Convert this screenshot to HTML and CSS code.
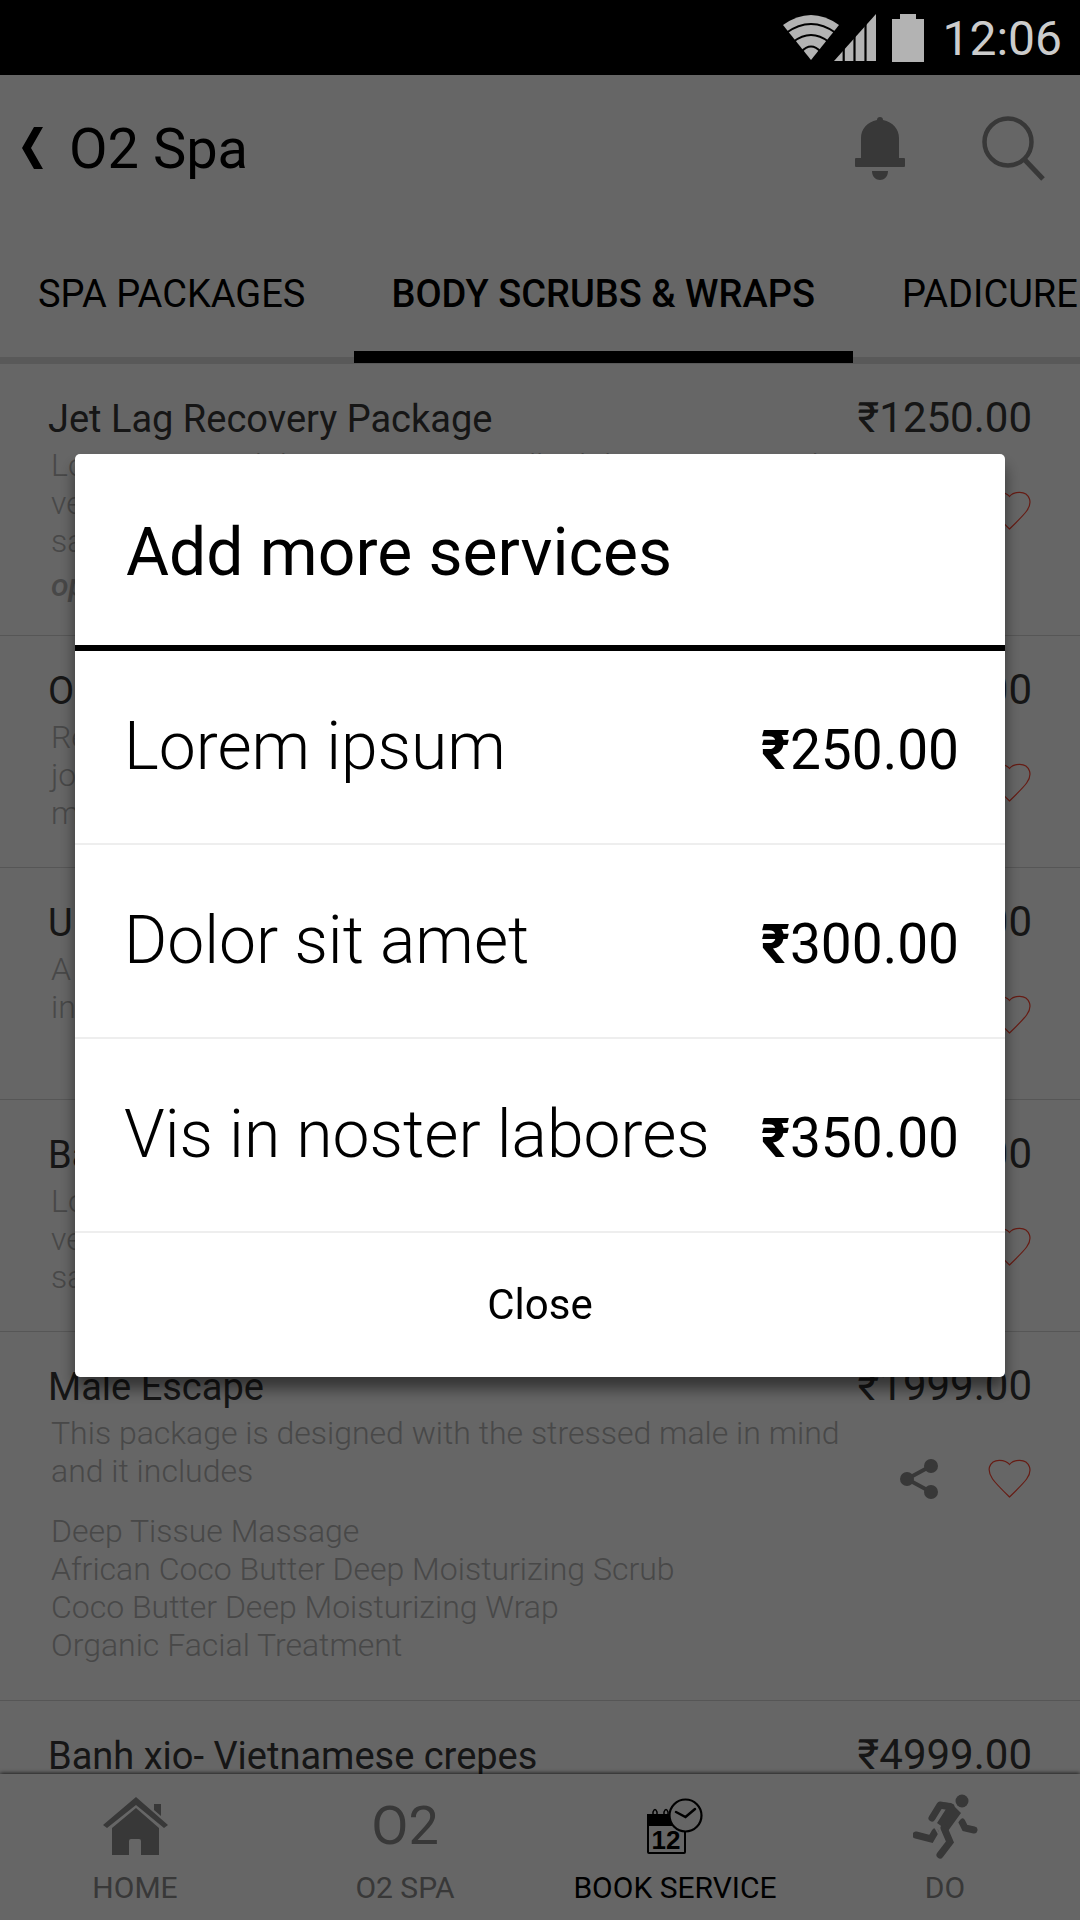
FILE: index.html
```html
<!DOCTYPE html>
<html lang="en">
<head>
<meta charset="utf-8">
<meta name="viewport" content="width=device-width, initial-scale=1">
<title>O2 Spa</title>
<link rel="stylesheet" href="styles.css">
</head>
<body>
<svg class="sprite" aria-hidden="true">
  <symbol id="heart" viewBox="0 0 43 39"><path d="M21.500 5.500C18 1 5 -2 1.500 8C-.5 16 5 22 21.500 38C38 22 44 16 41.500 8C38 -2 25 1 21.500 5.500Z" fill="none" stroke="#ff4632" stroke-width="1.200"/></symbol>
  <symbol id="share" viewBox="0 0 38 40"><path d="M31 7L7 20L31 33" fill="none" stroke="#8c8c8c" stroke-width="4"/><circle cx="7" cy="20" r="7" fill="#8c8c8c"/><circle cx="31" cy="7" r="7" fill="#8c8c8c"/><circle cx="31" cy="33" r="7" fill="#8c8c8c"/></symbol>
</svg>
<div class="app">
  <div class="status">
    <svg class="wifi" viewBox="0 0 56 45"><path d="M0 10Q28-10 56 10L28 45Z" fill="#b3b3b3"/><path d="M3 18Q28 0 53 18M10 27Q28 13 46 27M18 37Q28 26 38 37" fill="none" stroke="#000" stroke-width="2"/></svg>
    <svg class="signal" viewBox="0 0 42 47"><path d="M0 47L42 0V47Z" fill="#b3b3b3"/><path d="M9.700 0V47M20.500 0V47M31.500 0V47" stroke="#000" stroke-width="2.200"/></svg>
    <svg class="battery" viewBox="0 0 32 48"><path d="M8 0H24V5H32V48H0V5H8Z" fill="#b3b3b3"/></svg>
    <time class="clock">12:06</time>
  </div>

  <header class="appbar">
    <button class="icon-button" aria-label="Back"><svg class="back" viewBox="0 0 21 42"><path d="M12 0H21L9 21L21 42H12L0 21Z"/></svg></button>
    <h1 class="title">O2 Spa</h1>
    <button class="icon-button" aria-label="Notifications"><svg class="bell" viewBox="0 0 50 64"><path d="M22 4A3 3 0 0 1 28 4C38 6 44 13 44 22V42H49Q50 42 50 43V50Q50 51 49 51H1Q0 51 0 50V43Q0 42 1 42H6V22C6 13 12 6 22 4ZM17 55H33C33 67 17 67 17 55Z" fill="#8c8c8c"/></svg></button>
    <button class="icon-button" aria-label="Search"><svg class="search" viewBox="0 0 64 65"><circle cx="26" cy="26" r="23.500" fill="none" stroke="#8c8c8c" stroke-width="4.500"/><path d="M42 43L61 63" stroke="#8c8c8c" stroke-width="5"/></svg></button>
  </header>

  <nav class="tabs">
    <a class="tab" href="#packages">SPA PACKAGES</a>
    <a class="tab active" href="#scrubs">BODY SCRUBS &amp; WRAPS</a>
    <a class="tab" href="#padicure">PADICURE</a>
  </nav>

  <main class="list">
    <article class="item first">
      <div class="item-head"><h2>Jet Lag Recovery Package</h2><span class="price">₹1250.00</span></div>
      <div class="item-body">
        <div class="text"><p>Lorem ipsum dolor sit amet, an nulla dolor mea meis id<br>vel minim<br>sale omnes</p><p class="option">optional</p></div>
        <div class="actions"><svg class="share"><use href="#share"/></svg><svg class="heart"><use href="#heart"/></svg></div>
      </div>
    </article>
    <article class="item">
      <div class="item-head"><h2>O2 Ritual</h2><span class="price">₹1500.00</span></div>
      <div class="item-body">
        <div class="text"><p>Relaxing<br>journey<br>massage</p></div>
        <div class="actions"><svg class="share"><use href="#share"/></svg><svg class="heart"><use href="#heart"/></svg></div>
      </div>
    </article>
    <article class="item">
      <div class="item-head"><h2>Ultimate</h2><span class="price">₹1800.00</span></div>
      <div class="item-body">
        <div class="text"><p>A scrub<br>in oils</p></div>
        <div class="actions"><svg class="share"><use href="#share"/></svg><svg class="heart"><use href="#heart"/></svg></div>
      </div>
    </article>
    <article class="item">
      <div class="item-head"><h2>Balance</h2><span class="price">₹1600.00</span></div>
      <div class="item-body">
        <div class="text"><p>Lorem<br>vel minim<br>sale omnes</p></div>
        <div class="actions"><svg class="share"><use href="#share"/></svg><svg class="heart"><use href="#heart"/></svg></div>
      </div>
    </article>
    <article class="item tall">
      <div class="item-head"><h2>Male Escape</h2><span class="price">₹1999.00</span></div>
      <div class="item-body">
        <div class="text"><p>This package is designed with the stressed male in mind<br>and it includes</p>
        <ul class="includes"><li>Deep Tissue Massage</li><li>African Coco Butter Deep Moisturizing Scrub</li><li>Coco Butter Deep Moisturizing Wrap</li><li>Organic Facial Treatment</li></ul></div>
        <div class="actions"><svg class="share"><use href="#share"/></svg><svg class="heart"><use href="#heart"/></svg></div>
      </div>
    </article>
    <article class="item">
      <div class="item-head"><h2>Banh xio- Vietnamese crepes</h2><span class="price">₹4999.00</span></div>
    </article>
  </main>

  <nav class="bottom">
    <a class="dest" href="#home"><span class="glyph"><svg class="home" viewBox="0 0 65 58"><path d="M0 28L33 0L65 28L61 31L33 8L4 31ZM51 7H58V19L51 13ZM9 31L33 11L56 31V58H38V44Q38 42 36 42H28Q26 42 26 44V58H9Z" fill="#8c8c8c"/></svg></span>HOME</a>
    <a class="dest" href="#spa"><span class="glyph word">O2</span>O2 SPA</a>
    <a class="dest current" href="#book"><span class="glyph"><svg class="book" viewBox="0 0 56 57"><rect x="1" y="17" width="37" height="38" rx="1" fill="none" stroke="#000" stroke-width="2"/><path d="M0 16H24L28 28H0Z"/><path d="M6 18V14Q8 9 10 14V18M17 18V14Q19 9 21 14V18" fill="none" stroke="#000" stroke-width="1.500"/><circle cx="38.500" cy="17.500" r="16" fill="#fff" stroke="#000" stroke-width="2.200"/><path d="M29 14L38.500 19L48 11" fill="none" stroke="#000" stroke-width="2.500" stroke-linecap="round"/><text class="day" x="19" y="51" text-anchor="middle">12</text></svg></span>BOOK SERVICE</a>
    <a class="dest" href="#do"><span class="glyph"><svg class="run" viewBox="0 0 65 65"><circle cx="49" cy="7" r="6.500" fill="#8c8c8c"/><path d="M19 24L27 11L38 13" fill="none" stroke="#8c8c8c" stroke-width="7" stroke-linecap="round" stroke-linejoin="round"/><path d="M26 8L38 9L48 19L35 37L24 29L33 15Z" fill="#8c8c8c"/><path d="M49 28L52 34L61 36M3 41L18 45L22 38M31 34L37 48L27 61" fill="none" stroke="#8c8c8c" stroke-width="7" stroke-linecap="round"/><path d="M21 31L27 42M43 29L51 20" stroke="#fff" stroke-width="2"/></svg></span>DO</a>
  </nav>
</div>

<div class="scrim">
  <section class="dialog" role="dialog" aria-modal="true" aria-labelledby="dialog-title">
    <h2 class="dialog-title" id="dialog-title">Add more services</h2>
    <ul class="services">
      <li class="service"><span>Lorem ipsum</span><span class="cost"><b>₹</b>250.00</span></li>
      <li class="service"><span>Dolor sit amet</span><span class="cost"><b>₹</b>300.00</span></li>
      <li class="service"><span>Vis in noster labores</span><span class="cost"><b>₹</b>350.00</span></li>
    </ul>
    <button class="close">Close</button>
  </section>
</div>
</body>
</html>
```
FILE: styles.css
```css
* {
  box-sizing: border-box;
  margin: 0;
  padding: 0;
}

body {
  font-family: Roboto, "Noto Sans", sans-serif;
  background: #fff;
  color: #000;
}

svg {
  display: block;
  flex: none;
}

.sprite {
  display: none;
}

button {
  border: 0;
  background: none;
  font: inherit;
  color: inherit;
}

a {
  color: inherit;
  text-decoration: none;
}

ul {
  list-style: none;
}

.app {
  display: flex;
  flex-direction: column;
  height: 100vh;
  overflow: hidden;
}

/* Status bar stays above the scrim */
.status {
  display: flex;
  flex: none;
  justify-content: flex-end;
  align-items: center;
  height: 75px;
  padding-right: 18px;
  background: #000;
  position: relative;
  z-index: 3;
}

.wifi { width: 56px; height: 45px; }
.signal { width: 42px; height: 47px; margin-left: -5px; }
.battery { width: 32px; height: 48px; margin-left: 16px; }

.clock {
  margin-left: 18px;
  padding-top: 2px;
  font-size: 48px;
  color: #ccc;
}

.appbar {
  display: flex;
  flex: none;
  align-items: center;
  height: 146px;
  padding: 0 34px 0 22px;
}

.back { width: 21px; height: 42px; }
.bell { width: 50px; height: 64px; }
.search { width: 64px; height: 65px; margin-left: 77px; }

.title {
  flex: 1;
  margin-left: 26px;
  padding-top: 2px;
  font-size: 56px;
  font-weight: 400;
}

.tabs {
  display: flex;
  flex: none;
  gap: 12px;
  height: 143px;
  padding-left: 1px;
  overflow: hidden;
  font-size: 38px;
  line-height: 146px;
  white-space: nowrap;
  box-shadow: inset 0 -7px #dedede;
}

.tab {
  height: 142px;
  padding: 0 37px;
}

.tab.active {
  padding: 0 38px 0 37px;
  font-weight: 500;
  border-bottom: 12px solid #000;
}

.list {
  flex: 1;
  min-height: 0;
  overflow: hidden;
}

.item {
  min-height: 232px;
  padding: 28px 48px 0;
  border-bottom: 1px solid #d8d8d8;
}

.item.first { min-height: 272px; }
.item.tall { min-height: 369px; }

.item-head {
  display: flex;
  justify-content: space-between;
  align-items: baseline;
  line-height: 52px;
  color: #373737;
}

.item-head h2 {
  font-size: 38px;
  font-weight: 400;
}

.price {
  font-size: 42px;
}

.item-body {
  display: flex;
  justify-content: space-between;
}

.text {
  padding: 1px 0 0 3px;
  font-size: 32px;
  font-weight: 300;
  line-height: 38px;
  color: #b4b4b4;
  white-space: nowrap;
}

.option {
  margin-top: 6px;
  font-style: italic;
  font-weight: 500;
}

.includes {
  margin-top: 22px;
}

.actions {
  display: flex;
  gap: 50px;
  padding: 46px 1px 0 0;
}

.share { width: 38px; height: 40px; }
.heart { width: 43px; height: 39px; }

.bottom {
  display: grid;
  grid-template-columns: repeat(4, 1fr);
  flex: none;
  height: 146px;
  background: #fff;
  box-shadow: 0 -1px 4px rgba(0, 0, 0, .7);
  position: relative;
}

.dest {
  display: flex;
  flex-direction: column;
  align-items: center;
  padding-top: 17px;
  font-size: 30px;
  line-height: 36px;
  color: #8c8c8c;
}

.dest.current { color: #000; }

.glyph {
  display: flex;
  align-items: center;
  height: 70px;
  margin-bottom: 9px;
}

.word { font-size: 54px; }

.home { width: 65px; height: 58px; }
.book { width: 56px; height: 57px; }
.run { width: 65px; height: 65px; }

.day {
  font-family: "Liberation Sans", sans-serif;
  font-size: 26px;
  font-weight: 700;
}

.scrim {
  display: flex;
  align-items: center;
  position: fixed;
  inset: 0;
  z-index: 2;
  padding: 0 75px 90px;
  background: rgba(0, 0, 0, .6);
}

.dialog {
  flex: 1;
  background: #fff;
  border-radius: 5px;
  box-shadow: 0 12px 16px rgba(0, 0, 0, .5);
}

.dialog-title {
  padding: 55px 51px 0;
  height: 197px;
  border-bottom: 6px solid #000;
  font-size: 66px;
  font-weight: 400;
  line-height: 88px;
}

.service {
  display: flex;
  justify-content: space-between;
  align-items: baseline;
  height: 194px;
  padding: 52px 46px 0 49px;
  border-bottom: 2px solid #eee;
  font-size: 66px;
  font-weight: 300;
  line-height: 88px;
}

.cost {
  font-size: 55px;
  font-weight: 400;
}

.close {
  display: block;
  width: 100%;
  height: 144px;
  font-size: 42px;
}
```
